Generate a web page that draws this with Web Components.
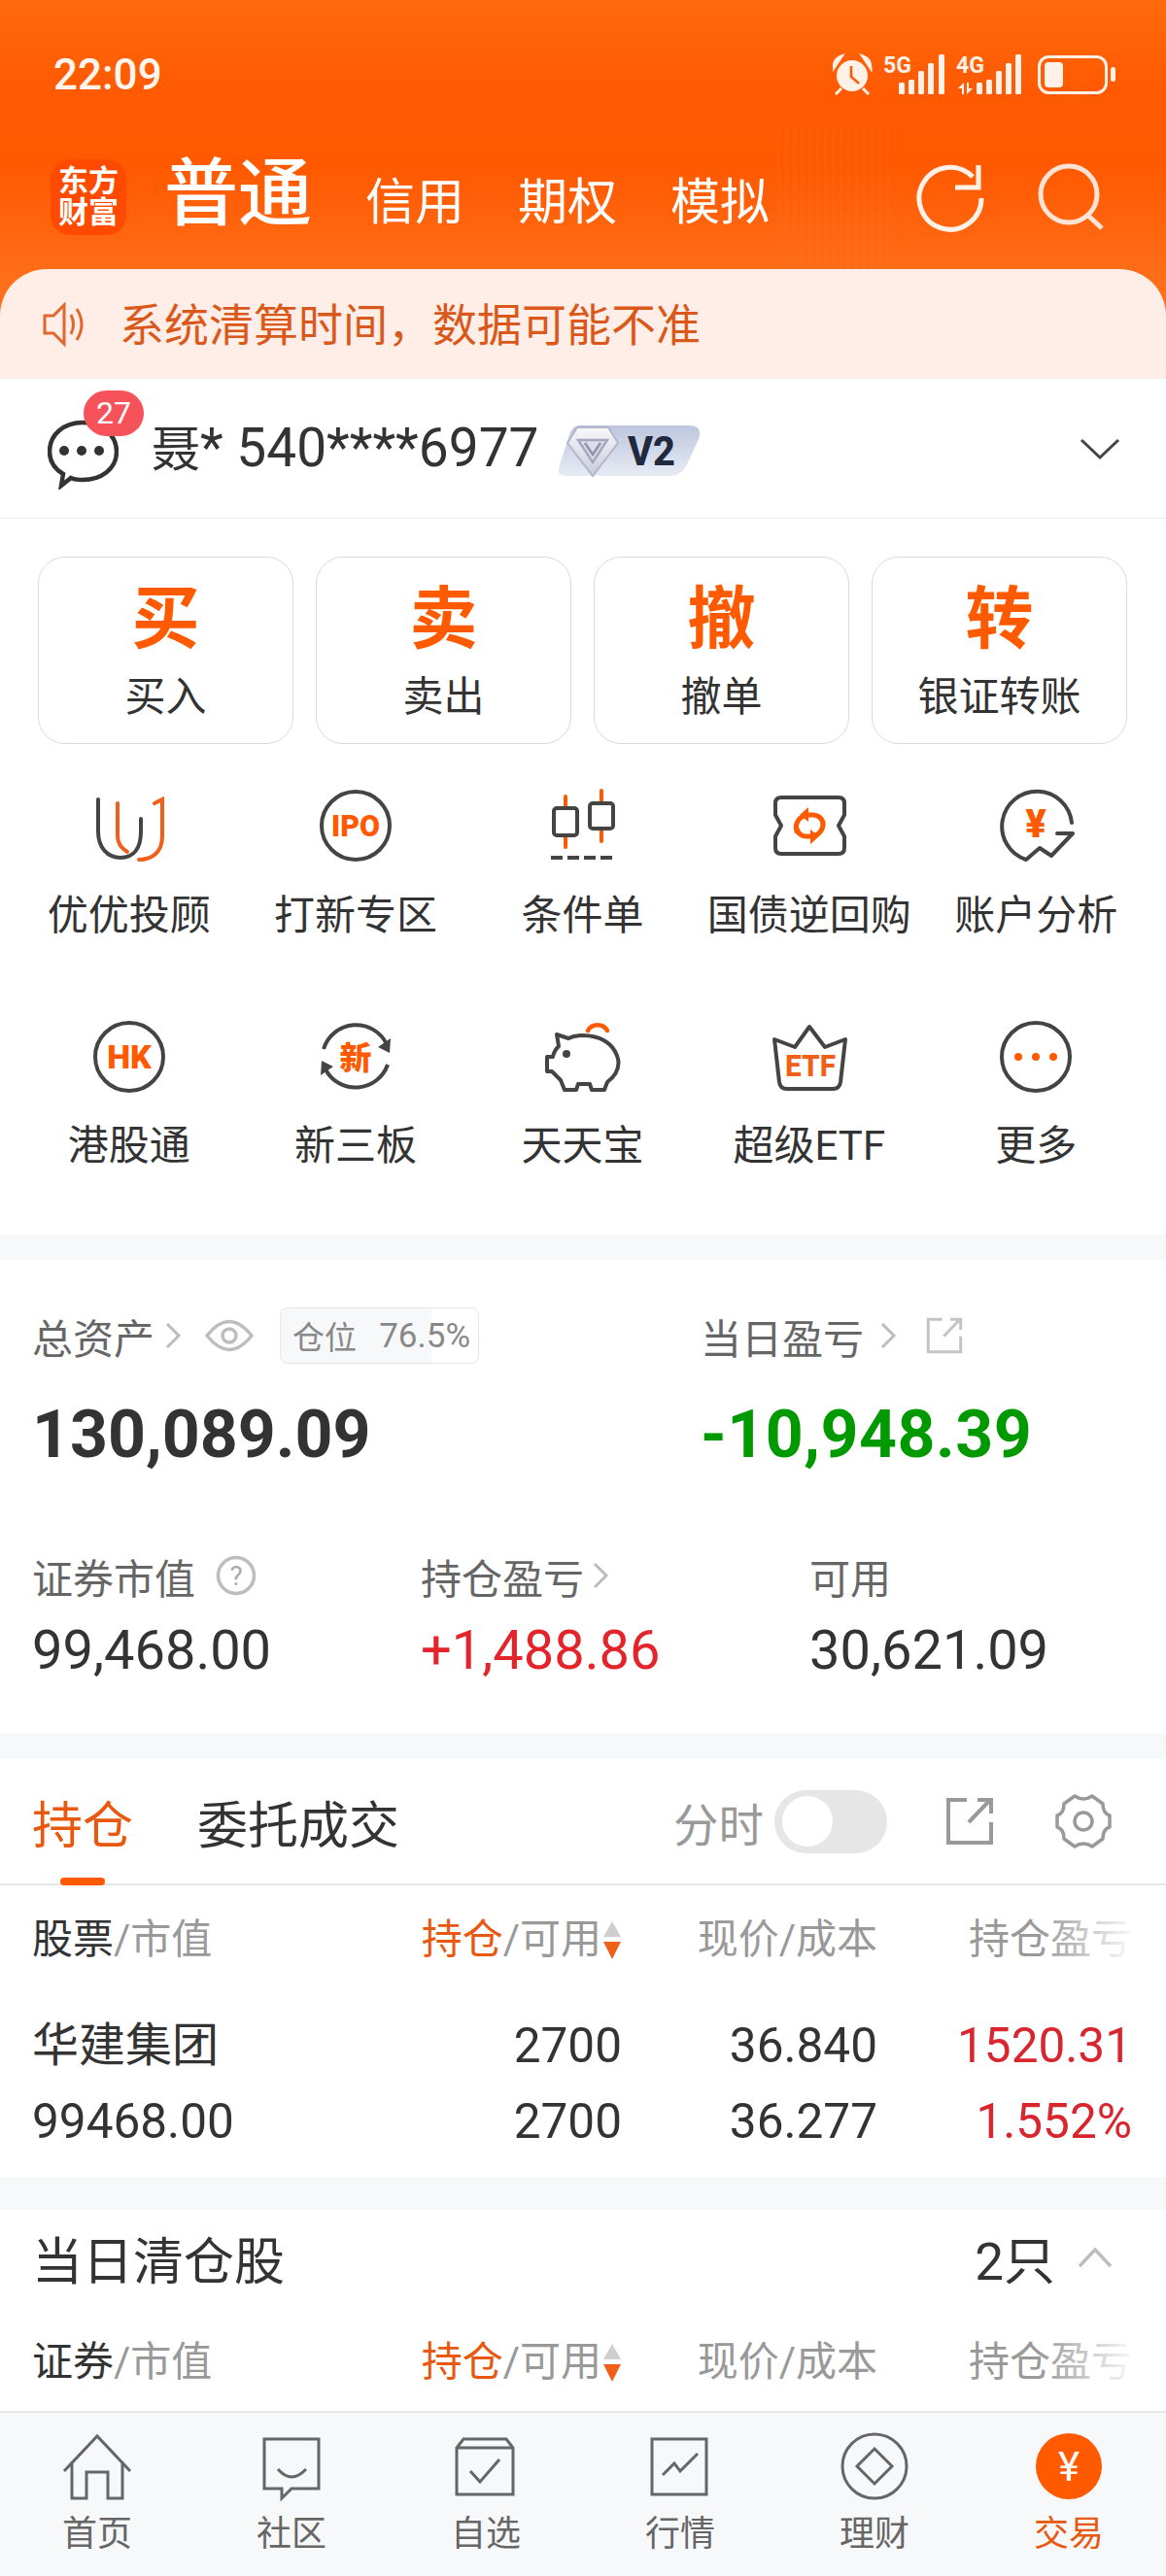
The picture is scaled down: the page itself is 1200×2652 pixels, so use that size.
<!DOCTYPE html>
<html lang="zh">
<head>
<meta charset="utf-8">
<title>交易</title>
<style>
    html, body { margin: 0; padding: 0; background: #fff; }
    body { font-family: Roboto, "Noto Sans CJK SC", sans-serif; color: #333; }
</style>
</head>
<body>
<app-page>
    <top-banner>
        <status-bar></status-bar>
        <account-tabs></account-tabs>
        <notice-bar>系统清算时间，数据可能不准</notice-bar>
    </top-banner>
    <user-row surname="聂" name="* 540****6977" count="27"></user-row>
    <trade-panel>
        <quick-btn slot="quick" main="买" label="买入"></quick-btn>
        <quick-btn slot="quick" main="卖" label="卖出"></quick-btn>
        <quick-btn slot="quick" main="撤" label="撤单"></quick-btn>
        <quick-btn slot="quick" main="转" label="银证转账"></quick-btn>
        <shortcut-item icon="uu" label="优优投顾"></shortcut-item>
        <shortcut-item icon="ipo" label="打新专区"></shortcut-item>
        <shortcut-item icon="cond" label="条件单"></shortcut-item>
        <shortcut-item icon="repo" label="国债逆回购"></shortcut-item>
        <shortcut-item icon="analysis" label="账户分析"></shortcut-item>
        <shortcut-item icon="hk" label="港股通"></shortcut-item>
        <shortcut-item icon="neeq" label="新三板"></shortcut-item>
        <shortcut-item icon="pig" label="天天宝"></shortcut-item>
        <shortcut-item icon="etf" label="超级ETF"></shortcut-item>
        <shortcut-item icon="more" label="更多"></shortcut-item>
    </trade-panel>
    <asset-panel></asset-panel>
    <position-panel>
        <stock-head first="股票"></stock-head>
        <stock-row name="华建集团" value="99468.00" hold="2700" avail="2700" price="36.840" cost="36.277" pnl="1520.31" pct="1.552%"></stock-row>
    </position-panel>
    <cleared-panel>
        <stock-head first="证券"></stock-head>
    </cleared-panel>
    <bottom-nav>
        <nav-item icon="home" label="首页"></nav-item>
        <nav-item icon="community" label="社区"></nav-item>
        <nav-item icon="watch" label="自选"></nav-item>
        <nav-item icon="market" label="行情"></nav-item>
        <nav-item icon="finance" label="理财"></nav-item>
        <nav-item icon="trade" label="交易" active></nav-item>
    </bottom-nav>
</app-page>

<script>
// ICONS

const svgText = `font-family: Roboto, "Noto Sans CJK SC", sans-serif`;

const shortcutIcons = {
    uu: `<g fill="none" stroke-width="4" stroke-linecap="round"><path stroke="#444" d="M8 12V45C8 62 18 72 31 72C45 72 52 62 52 45V32"/><path stroke="#f0601a" d="M28 16V50Q28 60 38 66M66 16L74 12V50C74 66 64 74 50 74"/></g>`,
    ipo: `<circle cx="40" cy="39" r="35" fill="none" stroke="#444" stroke-width="4"/><text x="40" y="50" text-anchor="middle" font-size="31" font-weight="900" fill="#ff5a00" style='${svgText}' textLength="50" lengthAdjust="spacingAndGlyphs">IPO</text>`,
    cond: `<g fill="none" stroke-width="4"><path stroke="#ff5a00" stroke-linecap="round" d="M23 9V61M60 3V55"/><rect x="11" y="21" width="24" height="28" rx="3" fill="#fff" stroke="#444"/><rect x="48" y="16" width="24" height="26" rx="3" fill="#fff" stroke="#444"/><path stroke="#444" stroke-dasharray="12 5" d="M8 72H74"/></g>`,
    repo: `<path fill="none" stroke="#444" stroke-width="4" stroke-linejoin="round" d="M11 10H70Q76 10 76 16V28L70 39L76 50V62Q76 68 70 68H11Q5 68 5 62V50L11 39L5 28V16Q5 10 11 10Z"/><g fill="none" stroke="#ff5a00" stroke-width="5" stroke-linecap="round"><path d="M27 45A13 13 0 0 1 38 28H43A10 10 0 0 1 54 37"/><path d="M54 36A13 13 0 0 1 43 50H38A10 10 0 0 1 27 42"/></g><path fill="#ff5a00" d="M39 20L30 28L39 35ZM41 43L50 50L41 58Z"/>`,
    analysis: `<path fill="none" stroke="#444" stroke-width="4" stroke-linejoin="round" stroke-linecap="round" d="M77 36A36 36 0 1 0 30 74L44 62L56 70L78 47H62"/><text x="40" y="51" text-anchor="middle" font-size="40" font-weight="900" fill="#ff5a00" style='${svgText}'>¥</text>`,
    hk: `<circle cx="40" cy="40" r="35" fill="none" stroke="#444" stroke-width="4"/><text x="40" y="52" text-anchor="middle" font-size="34" font-weight="900" fill="#ff5a00" style='${svgText}'>HK</text>`,
    neeq: `<g fill="none" stroke="#444" stroke-width="4"><path d="M7 32A35 35 0 0 1 72 27"/><path d="M73 48A35 35 0 0 1 9 53"/></g><path fill="#444" d="M76 21L75 36L63 30ZM4 59L5 44L17 50Z"/><text x="40" y="53" text-anchor="middle" font-size="33" font-weight="900" fill="#ff5a00" style='${svgText}'>新</text>`,
    pig: `<path fill="none" stroke="#444" stroke-width="4" stroke-linejoin="round" d="M14 17L26 21C38 15 70 16 77 42C79 52 74 60 66 66L63 74H50L48 68H36L34 74H22L18 64C14 60 11 57 9 55H4V40H10C11 34 14 31 16 29Z"/><circle cx="24" cy="37" r="4" fill="#444"/><path fill="none" stroke="#ff5a00" stroke-width="4.5" stroke-linecap="round" d="M46 13A11 10 0 0 1 66 13"/>`,
    etf: `<path fill="none" stroke="#444" stroke-width="4" stroke-linejoin="round" d="M4 22L25 30L40 9L56 30L77 22L72 66Q71 73 64 73H17Q10 73 9 66Z"/><text x="41" y="60" text-anchor="middle" font-size="32" font-weight="800" fill="#f0601a" style='${svgText}' textLength="52" lengthAdjust="spacingAndGlyphs">ETF</text>`,
    more: `<circle cx="40" cy="40" r="35" fill="none" stroke="#444" stroke-width="4"/><g fill="#ff5a00"><circle cx="22" cy="40" r="4"/><circle cx="40" cy="40" r="4"/><circle cx="58" cy="40" r="4"/></g>`
};

const navIcons = {
    home: `<path d="M6 40L40 4L74 40M14 30V68H29V41H51V68H66V30"/>`,
    community: `<path d="M12 7H68V58H40L30 68V58H12Z"/><path d="M26 38Q40 54 55 38"/>`,
    watch: `<path d="M10 16L17 7H61L68 16V64H10ZM10 16H68"/><path d="M24 40L34 51L54 28"/>`,
    market: `<path d="M11 7H67V64H11Z"/><path d="M22 44L34 32L40 40L58 22"/>`,
    finance: `<circle cx="40" cy="35" r="33"/><path d="M40 17L58 35L40 53L22 35Z"/>`,
    trade: `<circle cx="40" cy="35" r="34" fill="#ff5a00" stroke="none"/><text x="40" y="50" text-anchor="middle" font-size="42" fill="#fff" stroke="none" style='${svgText}'>¥</text>`
};

const chevron = `<svg width="18" height="30" viewBox="0 0 18 30" fill="none" stroke="#bdbdbd" stroke-width="3"><path d="M3 3L15 15L3 27"/></svg>`;

const exportIcon = (size, color, width) => `<svg width="${size}" height="${size}" viewBox="0 0 50 50" fill="none" stroke="${color}" stroke-width="${width}"><path d="M22 3H3V47H47V26M24 26L46 3M33 3H47V17"/></svg>`;

// BASE

class ShadowElement extends HTMLElement {
    connectedCallback() {
        if (this.shadowRoot) return;
        const shadow = this.attachShadow({ mode: "open" });
        shadow.innerHTML = `<style>${this.css()}</style>${this.markup()}`;
    }
    attr(name) {
        return this.getAttribute(name) || "";
    }
}

// TOP

class AppPage extends ShadowElement {
    css() {
        return `:host { display: flex; flex-direction: column; width: 1200px; height: 2652px; overflow: hidden; background: #f7f8fa; }`;
    }
    markup() { return `<slot></slot>`; }
}

class TopBanner extends ShadowElement {
    css() {
        return `:host { display: block; position: relative; height: 390px;
            background: linear-gradient(180deg, #ff6a0c 0, #ff5a02 90px, #ff5900 170px, #ff701c 300px); }
            .grain { position: absolute; left: 800px; top: 130px; width: 115px; height: 147px; opacity: .025;
                background: repeating-linear-gradient(90deg, #fff 0 3px, transparent 3px 8px); }`;
    }
    markup() { return `<div class="grain"></div><slot></slot>`; }
}

class StatusBar extends ShadowElement {
    css() {
        return `:host { display: flex; align-items: center; justify-content: space-between; height: 150px; padding: 4px 50px 0 55px; color: #fff5ef; box-sizing: border-box; }
            .time { font-size: 44px; font-weight: 500; line-height: 50px; }
            svg { display: block; }`;
    }
    markup() {
        return `<span class="time">22:09</span>
        <svg width="293" height="62" viewBox="857 46 293 62" fill="#fff1e8">
            <circle cx="877" cy="78" r="16"/>
            <path d="M866 58Q858 61 858 70ZM888 58Q896 61 896 70ZM866 91L860 97M888 91L894 97" stroke="#fff1e8" stroke-width="3"/>
            <path d="M876 68V79L884 86" fill="none" stroke="#ff5a00" stroke-width="2.5"/>
            <text x="909" y="75" font-size="23" font-weight="700" style='${svgText}' textLength="29" lengthAdjust="spacingAndGlyphs">5G</text>
            <rect x="925" y="85" width="6" height="12" rx="1.5"/><rect x="935" y="82" width="6" height="15" rx="1.5"/><rect x="945" y="73" width="6" height="24" rx="1.5"/><rect x="955" y="65" width="6" height="32" rx="1.5"/><rect x="966" y="56" width="6" height="41" rx="1.5"/>
            <text x="984" y="75" font-size="23" font-weight="700" style='${svgText}' textLength="29" lengthAdjust="spacingAndGlyphs">4G</text>
            <path d="M992 85L986 91H990V97H992ZM995 97L1001 91H997V85H995Z"/>
            <rect x="1005" y="85" width="6" height="12" rx="1.5"/><rect x="1015" y="82" width="6" height="15" rx="1.5"/><rect x="1025" y="73" width="6" height="24" rx="1.5"/><rect x="1035" y="65" width="6" height="32" rx="1.5"/><rect x="1045" y="56" width="6" height="41" rx="1.5"/>
            <rect x="1069.5" y="58.5" width="69" height="37" rx="10" fill="none" stroke="#fff1e8" stroke-width="3"/>
            <rect x="1075" y="64" width="19" height="26" rx="4"/>
            <rect x="1143" y="69" width="5" height="15" rx="2.5"/>
        </svg>`;
    }
}

class AccountTabs extends ShadowElement {
    css() {
        return `:host { display: flex; align-items: baseline; height: 127px; padding: 0 0 0 52px; box-sizing: border-box; color: #fff; position: relative; }
            .logo { align-self: flex-start; margin-top: 14px; width: 78px; height: 78px; border-radius: 20px; background: #ff4a00; display: flex; flex-direction: column; align-items: center; justify-content: center; font-size: 31px; font-weight: 700; line-height: 32px; flex: none; }
            .main { margin-left: 39px; font-size: 76px; line-height: 100px; font-weight: 500; }
            .sub { margin-left: 55px; font-size: 51px; line-height: 60px; }
            .icons { align-self: flex-start; margin: 17px 0 0 auto; padding-right: 61px; display: flex; gap: 52px; }
            svg { display: block; }`;
    }
    markup() {
        return `<div class="logo"><span>东方</span><span>财富</span></div>
        <span class="main">普通</span>
        <span class="sub">信用</span><span class="sub">期权</span><span class="sub">模拟</span>
        <div class="icons">
            <svg width="74" height="74" viewBox="0 0 74 74" fill="none" stroke="#fff1e8" stroke-width="5"><path d="M69 37A32 32 0 1 1 60 15M42 26H66V3"/></svg>
            <svg width="72" height="74" viewBox="0 0 72 74" fill="none" stroke="#ffe4d6" stroke-width="5"><circle cx="33" cy="33" r="29"/><path d="M53 55L67 68"/></svg>
        </div>`;
    }
}

class NoticeBar extends ShadowElement {
    css() {
        return `:host { display: flex; align-items: center; gap: 33px; height: 113px; padding-left: 44px; box-sizing: border-box; background: #ffeee7; border-radius: 48px 48px 0 0; color: #d9581a; font-size: 46px; }
            .text { margin-bottom: 6px; }
            svg { display: block; flex: none; }`;
    }
    markup() {
        return `<svg width="46" height="46" viewBox="0 0 46 46" fill="none" stroke="#e2672c" stroke-width="3"><path d="M2 14H11L22 3V43L11 32H2Z"/><path d="M29 13Q34 23 29 33M35 7Q45 23 35 39"/></svg><span class="text"><slot></slot></span>`;
    }
}

// USER

class UserRow extends ShadowElement {
    css() {
        return `:host { display: flex; align-items: center; position: relative; height: 144px; box-sizing: border-box; border-bottom: 1px solid #ececec; background: #fff; padding: 0 47px 0 49px; }
            .msg { position: relative; width: 73px; height: 76px; margin-right: 34px; flex: none; margin-top: 16px; }
            .badge { position: absolute; left: 37px; top: -30px; width: 62px; height: 47px; border-radius: 24px; background: #f5525a; color: #fff; font-size: 32px; line-height: 47px; text-align: center; }
            .name { font-size: 55px; line-height: 60px; color: #333; white-space: nowrap; }
            .name b { font-weight: 400; font-size: 50px; }
            .v2 { margin-left: 20px; flex: none; display: block; }
            .down { margin-left: auto; display: block; }
            svg { display: block; }`;
    }
    markup() {
        return `<div class="msg">
            <svg width="73" height="72" viewBox="0 0 73 72" fill="none" stroke="#333" stroke-width="4.5"><path d="M14 68L16 56C6 50 2 42 2 33C2 15 17 3 36 3C55 3 71 15 71 33C71 51 55 62 36 62C30 62 26 61 24 60Z"/><g fill="#333" stroke="none"><circle cx="17" cy="32" r="5"/><circle cx="35" cy="32" r="5"/><circle cx="53" cy="32" r="5"/></g></svg>
            <span class="badge">${this.attr("count")}</span>
        </div>
        <span class="name"><b>${this.attr("surname")}</b>${this.attr("name")}</span>
        <svg class="v2" width="148" height="60" viewBox="0 0 148 60">
            <defs>
                <linearGradient id="bg" x1="0" y1="0" x2="0" y2="1"><stop offset="0" stop-color="#bcc6de"/><stop offset="1" stop-color="#e8ebf4"/></linearGradient>
                <linearGradient id="gem" x1="0" y1="0" x2="0" y2="1"><stop offset="0" stop-color="#f7f7fb"/><stop offset="1" stop-color="#c9cbdb"/></linearGradient>
            </defs>
            <path fill="url(#bg)" d="M22 6H135Q150 6 145 20L134 44Q128 58 115 58H8Q-2 58 2 46L12 16Q15 6 22 6Z"/>
            <path fill="url(#gem)" stroke="#b4b7ca" stroke-width="2" d="M20 8H52L62 24L36 58L10 24Z"/>
            <path fill="#dcdde9" stroke="#a4a7bf" stroke-width="2.5" d="M21 21H51L36 44Z"/>
            <path fill="none" stroke="#8f93ae" stroke-width="2.5" d="M28 24L36 36L44 24"/>
            <text x="72" y="47" font-size="42" font-weight="800" fill="#1f2940" style='${svgText}' textLength="49" lengthAdjust="spacingAndGlyphs">V2</text>
        </svg>
        <svg class="down" width="42" height="24" viewBox="0 0 42 24" fill="none" stroke="#444" stroke-width="3"><path d="M2 3L21 21L40 3"/></svg>`;
    }
}

// TRADE PANEL

class TradePanel extends ShadowElement {
    css() {
        return `:host { display: block; background: #fff; height: 737px; box-sizing: border-box; padding-top: 39px; }
            .quick { display: grid; grid-template-columns: repeat(4, 263px); gap: 23px; padding-left: 39px; }
            .grid { display: grid; grid-template-columns: repeat(5, 233.4px); row-gap: 80px; padding: 45px 0 0 16px; }`;
    }
    markup() {
        return `<div class="quick"><slot name="quick"></slot></div><div class="grid"><slot></slot></div>`;
    }
}

class QuickBtn extends ShadowElement {
    css() {
        return `:host { display: flex; flex-direction: column; align-items: center; box-sizing: border-box; height: 193px; border: 1.5px solid #d9d9d9; border-radius: 28px; }
            .main { font-size: 70px; font-weight: 700; color: #ff5a00; line-height: 80px; margin-top: 24px; }
            .label { font-size: 42px; color: #333; line-height: 50px; margin-top: 15px; }`;
    }
    markup() {
        return `<span class="main">${this.attr("main")}</span><span class="label">${this.attr("label")}</span>`;
    }
}

class ShortcutItem extends ShadowElement {
    css() {
        return `:host { display: flex; flex-direction: column; align-items: center; }
            svg { display: block; }
            .label { font-size: 42px; color: #333; line-height: 50px; margin-top: 27px; white-space: nowrap; }`;
    }
    markup() {
        return `<svg width="80" height="80" viewBox="0 0 80 80">${shortcutIcons[this.attr("icon")]}</svg><span class="label">${this.attr("label")}</span>`;
    }
}

// ASSETS

class AssetPanel extends ShadowElement {
    css() {
        return `:host { display: block; background: #fff; margin-top: 26px; height: 488px; box-sizing: border-box; padding: 48px 0 0 33px; }
            .top { display: grid; grid-template-columns: 688px 1fr; }
            .label { display: flex; align-items: center; height: 60px; color: #666; font-size: 42px; }
            .label .gap { margin-left: 10px; display: flex; }
            .eye { margin-left: 24px; display: block; }
            .pos { margin-left: 27px; width: 205px; height: 58px; box-sizing: border-box; border: 1.5px solid #e6e6e6; border-radius: 8px; background: linear-gradient(90deg, #f7f8fa 76.5%, #fff 76.5%); display: flex; align-items: center; justify-content: space-between; padding: 0 8px 0 12px; font-size: 33px; color: #888; }
            .pos .pct { font-size: 35px; }
            .big { font-size: 68px; font-weight: 700; line-height: 80px; margin-top: 32px; color: #333; }
            .big.down { color: #009a00; letter-spacing: .5px; }
            .bottom { display: grid; grid-template-columns: 400px 400px 1fr; margin-top: 80px; }
            .bottom .label { height: 50px; }
            .val { font-size: 56px; line-height: 70px; margin-top: 17px; color: #333; }
            .val.up { color: #e3242b; }
            .ext { margin-left: 30px; display: flex; }
            svg { flex: none; }`;
    }
    markup() {
        return `<div class="top">
            <div>
                <div class="label">总资产<span class="gap">${chevron}</span>
                    <svg class="eye" width="50" height="34" viewBox="0 0 50 34" fill="none" stroke="#bdbdbd" stroke-width="3.5"><path d="M2 17Q25 -12 48 17Q25 46 2 17Z"/><circle cx="25" cy="17" r="7"/></svg>
                    <span class="pos"><span>仓位</span><span class="pct">76.5%</span></span>
                </div>
                <div class="big">130,089.09</div>
            </div>
            <div>
                <div class="label">当日盈亏<span class="gap" style="margin-left:16px">${chevron}</span><span class="ext">${exportIcon(38, "#c4c4c4", 4)}</span></div>
                <div class="big down">-10,948.39</div>
            </div>
        </div>
        <div class="bottom">
            <div>
                <div class="label">证券市值
                    <svg style="margin-left:21px" width="42" height="42" viewBox="0 0 42 42"><circle cx="21" cy="21" r="18.5" fill="none" stroke="#bdbdbd" stroke-width="3.5"/><text x="21" y="31" text-anchor="middle" font-size="28" fill="#aaa" style='${svgText}'>?</text></svg>
                </div>
                <div class="val">99,468.00</div>
            </div>
            <div>
                <div class="label">持仓盈亏<span class="gap" style="margin-left:8px">${chevron}</span></div>
                <div class="val up">+1,488.86</div>
            </div>
            <div>
                <div class="label">可用</div>
                <div class="val">30,621.09</div>
            </div>
        </div>`;
    }
}

// POSITIONS

class PositionPanel extends ShadowElement {
    css() {
        return `:host { display: block; background: #fff; margin-top: 26px; height: 430px; --head-gap: 31px; }
            .tabs { position: relative; display: flex; align-items: center; height: 130px; box-sizing: border-box; border-bottom: 2px solid #e6e6e6; padding: 0 55px 0 33px; font-size: 52px; color: #333; }
            .on { color: #e8590f; margin-right: 66px; }
            .bar { position: absolute; left: 62px; bottom: -2px; width: 46px; height: 8px; border-radius: 4px; background: #ff5a00; }
            .right { margin-left: auto; display: flex; align-items: center; }
            .time { font-size: 46.5px; color: #999; margin-right: 11px; }
            .toggle { width: 116px; height: 65px; border-radius: 33px; background: #e6e6e6; display: flex; align-items: center; padding-left: 8px; box-sizing: border-box; }
            .knob { width: 52px; height: 52px; border-radius: 50%; background: #fff; }
            .ext { margin-left: 60px; display: block; }
            .gear { margin-left: 62px; display: block; }
            svg { display: block; }`;
    }
    markup() {
        return `<div class="tabs">
            <span class="on">持仓</span><span>委托成交</span><span class="bar"></span>
            <div class="right">
                <span class="time">分时</span>
                <div class="toggle"><span class="knob"></span></div>
                <span class="ext">${exportIcon(50, "#999", 4)}</span>
                <svg class="gear" width="60" height="60" viewBox="0 0 60 60" fill="none" stroke="#999" stroke-width="3.5" stroke-linejoin="round"><path d="M21 4Q30 10 39 4L50 12Q50 22 57 24V36Q50 38 50 48L39 56Q30 50 21 56L10 48Q10 38 3 36V24Q10 22 10 12Z"/><circle cx="30" cy="30" r="9"/></svg>
            </div>
        </div>
        <slot></slot>`;
    }
}

class StockHead extends ShadowElement {
    css() {
        return `:host { display: grid; position: relative; grid-template-columns: 381px 226px 263px 262px; height: 50px; padding: 0 35px 0 33px; margin-top: var(--head-gap, 31px); font-size: 42px; line-height: 50px; color: #999; white-space: nowrap; }
            b { font-weight: 400; color: #333; }
            i { font-style: normal; color: #e8590f; }
            .r { text-align: right; }
            .sort { display: flex; justify-content: flex-end; align-items: center; }
            .fade { position: absolute; right: 0; top: 0; width: 130px; height: 100%; background: linear-gradient(90deg, rgba(255,255,255,0), #fff 78%); }
            svg { display: block; margin-left: 1px; }`;
    }
    markup() {
        return `<div><b>${this.attr("first")}</b>/市值</div>
        <div class="sort"><i>持仓</i>/可用<svg width="20" height="40" viewBox="0 0 20 40"><path fill="#cfcfcf" d="M10 1L19 17H1Z"/><path fill="#f0601a" d="M1 22H19L10 40Z"/></svg></div>
        <div class="r">现价/成本</div>
        <div class="r">持仓盈亏</div>
        <span class="fade"></span>`;
    }
}

class StockRow extends ShadowElement {
    css() {
        return `:host { display: grid; grid-template-columns: 381px 226px 263px 262px; grid-auto-rows: 60px; row-gap: 18px; padding: 0 35px 0 33px; margin-top: 54px; font-size: 49.5px; line-height: 60px; color: #333; }
            .r { text-align: right; }
            .red { color: #d9262e; }
            .name { font-size: 48px; }`;
    }
    markup() {
        return `<div class="name">${this.attr("name")}</div><div class="r">${this.attr("hold")}</div><div class="r">${this.attr("price")}</div><div class="r red">${this.attr("pnl")}</div>
        <div>${this.attr("value")}</div><div class="r">${this.attr("avail")}</div><div class="r">${this.attr("cost")}</div><div class="r red">${this.attr("pct")}</div>`;
    }
}

class ClearedPanel extends ShadowElement {
    css() {
        return `:host { display: block; background: #fff; margin-top: 34px; height: 207px; padding-top: 14px; box-sizing: border-box; overflow: hidden; --head-gap: 48px; }
            .title { display: flex; align-items: center; height: 70px; padding: 0 55px 0 33px; font-size: 52px; color: #333; }
            .count { margin-left: auto; font-size: 53px; }
            svg { display: block; margin-left: 23px; }`;
    }
    markup() {
        return `<div class="title"><span>当日清仓股</span><span class="count">2只</span>
            <svg width="36" height="22" viewBox="0 0 36 22" fill="none" stroke="#bdbdbd" stroke-width="3.5"><path d="M2 20L18 3L34 20"/></svg>
        </div><slot></slot>`;
    }
}

// BOTTOM NAV

class BottomNav extends ShadowElement {
    css() {
        return `:host { display: grid; grid-template-columns: repeat(6, 200px); flex: 1; box-sizing: border-box; border-top: 2px solid #e6e6e6; background: #f7f8fa; }`;
    }
    markup() { return `<slot></slot>`; }
}

class NavItem extends ShadowElement {
    css() {
        return `:host { display: flex; flex-direction: column; align-items: center; padding-top: 20px; }
            svg { display: block; }
            .label { font-size: 36px; line-height: 44px; margin-top: 11px; color: #666; }
            :host([active]) .label { color: #e8590f; }`;
    }
    markup() {
        return `<svg width="80" height="72" viewBox="0 0 80 72" fill="none" stroke="#666" stroke-width="3">${navIcons[this.attr("icon")]}</svg><span class="label">${this.attr("label")}</span>`;
    }
}

customElements.define("app-page", AppPage);
customElements.define("top-banner", TopBanner);
customElements.define("status-bar", StatusBar);
customElements.define("account-tabs", AccountTabs);
customElements.define("notice-bar", NoticeBar);
customElements.define("user-row", UserRow);
customElements.define("trade-panel", TradePanel);
customElements.define("quick-btn", QuickBtn);
customElements.define("shortcut-item", ShortcutItem);
customElements.define("asset-panel", AssetPanel);
customElements.define("position-panel", PositionPanel);
customElements.define("stock-head", StockHead);
customElements.define("stock-row", StockRow);
customElements.define("cleared-panel", ClearedPanel);
customElements.define("bottom-nav", BottomNav);
customElements.define("nav-item", NavItem);
</script>
</body>
</html>
